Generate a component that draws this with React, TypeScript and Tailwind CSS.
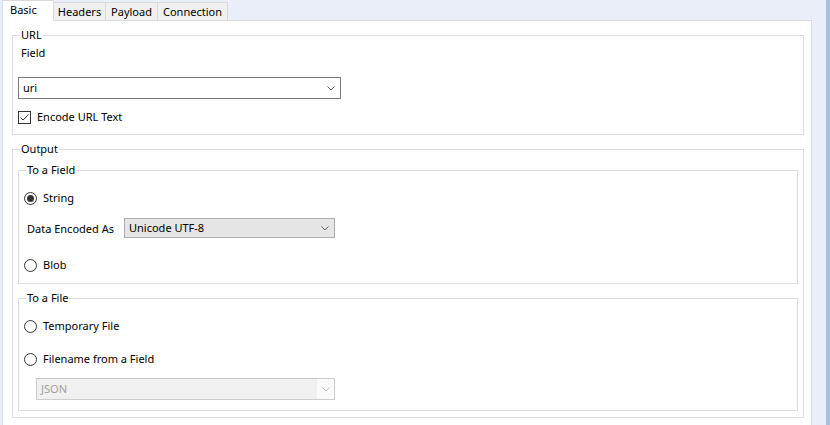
import React from 'react';

function Chevron({ color = '#5f5f5f' }: { color?: string }) {
  return (
    <svg width="8" height="5" viewBox="0 0 8 5" fill="none">
      <path d="M0.5 0.5 L4 4 L7.5 0.5" stroke={color} strokeWidth="1" />
    </svg>
  );
}

function Radio({ checked, label }: { checked?: boolean; label: string }) {
  return (
    <div className="flex items-center h-[16px]">
      <span className="w-[13px] h-[13px] rounded-full border border-[#333333] bg-white flex items-center justify-center">
        {checked && <span className="w-[7px] h-[7px] rounded-full bg-[#333333]" />}
      </span>
      <span className="ml-[6px] leading-[16px]">{label}</span>
    </div>
  );
}

function Group({ title, className, children }: { title: string; className?: string; children: React.ReactNode }) {
  return (
    <fieldset className={`border border-[#DCDCDC] ${className ?? ''}`}>
      <legend className="ml-[7px] px-[1px] leading-[16px]">{title}</legend>
      {children}
    </fieldset>
  );
}

export default function App() {
  const tabs = [
    { name: 'Headers', w: 'w-[52px]' },
    { name: 'Payload', w: 'w-[52px]' },
    { name: 'Connection', w: 'w-[70px]' },
  ];

  return (
    <div className="w-[830px] h-[425px] overflow-hidden flex bg-[#E9EEF9] font-['Noto_Sans',sans-serif] text-[11px] text-black">
      <div className="w-[826px] pl-[2px] flex flex-col">
        {/* tab strip */}
        <div className="h-[21px] -mb-px flex items-start relative z-10">
          <div className="w-[52px] h-[21px] bg-white border border-b-0 border-[#D9D9D9] pl-[7px] leading-[18px]">
            Basic
          </div>
          {tabs.map((t) => (
            <div
              key={t.name}
              className={`${t.w} h-[18px] mt-[2px] bg-[#F0F0F0] border-t border-r border-[#D9D9D9] flex items-center justify-center leading-[16px] pt-px`}
            >
              {t.name}
            </div>
          ))}
        </div>

        {/* tab page */}
        <div className="w-[810px] flex-1 bg-white border border-b-0 border-[#D9D9D9] pl-[9px] pr-[7px]">
          <Group title="URL" className="mt-[6px]">
            <div className="pl-[5px] pb-[9px]">
              <div className="ml-[3px] mt-[2px] leading-[16px]">Field</div>
              <div className="mt-[16px] w-[323px] h-[22px] border border-[#7A7A7A] bg-white flex items-center justify-between pl-[4px] pr-[5px]">
                <span>uri</span>
                <Chevron />
              </div>
              <div className="mt-[10px] flex items-center h-[16px]">
                <span className="w-[13px] h-[13px] border border-[#333333] flex items-center justify-center">
                  <svg width="11" height="11" viewBox="0 0 11 11" fill="none">
                    <path d="M1.5 5.5 L4 8 L9.5 2.5" stroke="#333333" strokeWidth="1" />
                  </svg>
                </span>
                <span className="ml-[6px]">Encode URL Text</span>
              </div>
            </div>
          </Group>

          <Group title="Output" className="mt-[6px]">
            <div className="px-[5px] pb-[6px]">
              <Group title="To a Field" className="mt-[5px]">
                <div className="pl-[5px] pb-[10px]">
                  <div className="mt-[12px]">
                    <Radio checked label="String" />
                  </div>
                  <div className="mt-[12px] flex items-center h-[20px]">
                    <span className="ml-[3px] w-[97px] pt-[3px]">Data Encoded As</span>
                    <div className="w-[211px] h-[20px] border border-[#ADADAD] bg-[#E5E5E5] flex items-center justify-between pl-[4px] pr-[5px]">
                      <span>Unicode UTF-8</span>
                      <Chevron />
                    </div>
                  </div>
                  <div className="mt-[19px]">
                    <Radio label="Blob" />
                  </div>
                </div>
              </Group>

              <Group title="To a File" className="mt-[6px]">
                <div className="pl-[5px] pb-[10px]">
                  <div className="mt-[12px]">
                    <Radio label="Temporary File" />
                  </div>
                  <div className="mt-[17px]">
                    <Radio label="Filename from a Field" />
                  </div>
                  <div className="mt-[11px] ml-[12px] w-[299px] h-[22px] border border-[#CCCCCC] flex">
                    <div className="flex-1 bg-[#F0F0F0] pl-[4px] flex items-center text-[#A0A0A0]">JSON</div>
                    <div className="w-[17px] bg-[#FAFAFA] flex items-center justify-center">
                      <Chevron color="#BFBFBF" />
                    </div>
                  </div>
                </div>
              </Group>
            </div>
          </Group>
        </div>
      </div>
      <div className="w-[4px] bg-[#A9BEE1]" />
    </div>
  );
}
